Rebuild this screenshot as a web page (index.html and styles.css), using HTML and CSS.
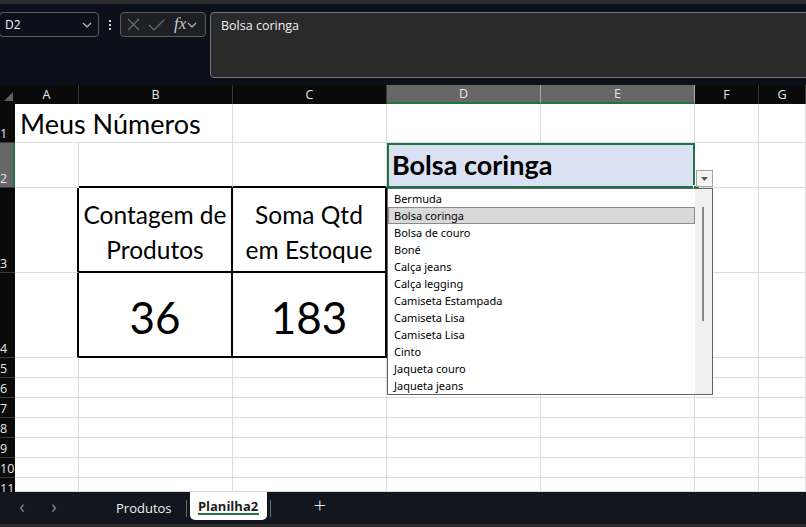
FILE: index.html
```html
<!DOCTYPE html>
<html lang="pt-BR">
<head>
    <meta charset="UTF-8">
    <meta name="viewport" content="width=device-width, initial-scale=1.0">
    <title>Planilha2</title>
    <link rel="stylesheet" href="styles.css">
</head>
<body>
    <div class="topstrip"></div>

    <!-- name box + formula bar -->
    <div class="formula">
        <div class="namebox">
            <span>D2</span>
            <svg class="chev" width="10" height="6" viewBox="0 0 10 6"><polyline points="1,1 5,5 9,1"/></svg>
        </div>
        <div class="dots"><i></i><i></i><i></i></div>
        <div class="fbtns">
            <svg width="13" height="13" viewBox="0 0 13 13"><path d="M1 1 L12 12 M12 1 L1 12"/></svg>
            <svg width="17" height="12" viewBox="0 0 17 12"><path d="M1 6 L6 11 L16 1"/></svg>
            <span class="fx">fx</span>
            <svg class="chev" width="10" height="6" viewBox="0 0 10 6"><polyline points="1,1 5,5 9,1"/></svg>
        </div>
        <div class="fbar">Bolsa coringa</div>
    </div>

    <div class="sheet">
        <!-- column headers -->
        <div class="corner"><svg width="15" height="19" viewBox="0 0 15 19"><polygon points="4,16 13,16 13,7"/></svg></div>
        <div class="ch">A</div>
        <div class="ch">B</div>
        <div class="ch">C</div>
        <div class="ch sel">D</div>
        <div class="ch sel">E</div>
        <div class="ch">F</div>
        <div class="ch">G</div>

        <!-- row 1 -->
        <div class="rh">1</div>
        <div class="c title">Meus Números</div>
        <div class="c"></div>
        <div class="c"></div>
        <div class="c"></div>
        <div class="c"></div>
        <div class="c"></div>
        <div class="c"></div>

        <!-- row 2 -->
        <div class="rh sel">2</div>
        <div class="c"></div>
        <div class="c box-top"></div>
        <div class="c box-top"></div>
        <div class="c active">Bolsa coringa</div>
        <div class="c"></div>
        <div class="c"></div>

        <!-- row 3 -->
        <div class="rh">3</div>
        <div class="c box-left"></div>
        <div class="c box label">Contagem de<br>Produtos</div>
        <div class="c box label">Soma Qtd<br>em Estoque</div>
        <div class="c"></div>
        <div class="c"></div>
        <div class="c"></div>
        <div class="c"></div>

        <!-- row 4 -->
        <div class="rh">4</div>
        <div class="c box-left"></div>
        <div class="c box num">36</div>
        <div class="c box num">183</div>
        <div class="c"></div>
        <div class="c"></div>
        <div class="c"></div>
        <div class="c"></div>

        <div class="rh">5</div><div class="c"></div><div class="c"></div><div class="c"></div><div class="c"></div><div class="c"></div><div class="c"></div><div class="c"></div>
        <div class="rh">6</div><div class="c"></div><div class="c"></div><div class="c"></div><div class="c"></div><div class="c"></div><div class="c"></div><div class="c"></div>
        <div class="rh">7</div><div class="c"></div><div class="c"></div><div class="c"></div><div class="c"></div><div class="c"></div><div class="c"></div><div class="c"></div>
        <div class="rh">8</div><div class="c"></div><div class="c"></div><div class="c"></div><div class="c"></div><div class="c"></div><div class="c"></div><div class="c"></div>
        <div class="rh">9</div><div class="c"></div><div class="c"></div><div class="c"></div><div class="c"></div><div class="c"></div><div class="c"></div><div class="c"></div>
        <div class="rh">10</div><div class="c"></div><div class="c"></div><div class="c"></div><div class="c"></div><div class="c"></div><div class="c"></div><div class="c"></div>
        <div class="rh last">11</div><div class="c"></div><div class="c"></div><div class="c"></div><div class="c"></div><div class="c"></div><div class="c"></div><div class="c"></div>

        <!-- validation dropdown -->
        <div class="fill-handle"></div>
        <div class="dd-btn"><svg width="7" height="4" viewBox="0 0 7 4"><polygon points="0,0 7,0 3.5,4"/></svg></div>
        <div class="dd-list">
            <ul>
                <li>Bermuda</li>
                <li class="hl">Bolsa coringa</li>
                <li>Bolsa de couro</li>
                <li>Boné</li>
                <li>Calça jeans</li>
                <li>Calça legging</li>
                <li>Camiseta Estampada</li>
                <li>Camiseta Lisa</li>
                <li>Camiseta Lisa</li>
                <li>Cinto</li>
                <li>Jaqueta couro</li>
                <li>Jaqueta jeans</li>
            </ul>
            <div class="scroll"><div class="thumb"></div></div>
        </div>
    </div>

    <div class="tabs">
        <span class="arrow">&lsaquo;</span>
        <span class="arrow">&rsaquo;</span>
        <span class="tab">Produtos</span>
        <span class="sep"></span>
        <span class="tab current">Planilha2</span>
        <span class="sep"></span>
        <span class="plus">+</span>
    </div>
    <div class="bottomstrip"></div>
</body>
</html>
```

FILE: styles.css
```css
body {
    margin: 0;
    padding: 0;
    background-color: #0b101a;
    font-family: "Open Sans", "Noto Sans", sans-serif;
    overflow: hidden;
}

.topstrip {
    height: 4px;
    background-color: #2c2c2c;
}

/* formula area */
.formula {
    display: flex;
    align-items: flex-start;
    height: 81px;
    padding-top: 8px;
    box-sizing: border-box;
}

.namebox {
    display: flex;
    align-items: center;
    justify-content: space-between;
    width: 100px;
    height: 25px;
    margin-left: -1px;
    padding: 0 6px 0 5px;
    box-sizing: border-box;
    border: 1px solid #5b5b5b;
    border-radius: 4px;
    color: #f2f2f2;
    font-size: 12px;
}

.chev polyline {
    fill: none;
    stroke: #bdbdbd;
    stroke-width: 1.2;
}

.dots {
    width: 21px;
    height: 25px;
    display: flex;
    flex-direction: column;
    align-items: center;
    justify-content: center;
    gap: 2px;
}

.dots i {
    display: block;
    width: 2px;
    height: 2px;
    background-color: #d0d0d0;
}

.fbtns {
    display: flex;
    align-items: center;
    width: 86px;
    height: 25px;
    padding: 0 4px 0 6px;
    box-sizing: border-box;
    border: 1px solid #5b5b5b;
    border-radius: 4px;
    background-color: #1d1f24;
}

.fbtns path {
    fill: none;
    stroke: #6e6e6e;
    stroke-width: 1.2;
}

.fbtns svg:nth-child(2) {
    margin-left: 8px;
}

.fx {
    margin-left: 9px;
    font-family: "Liberation Serif", serif;
    font-style: italic;
    font-size: 17px;
    color: #c9c9c9;
    line-height: 1;
    margin-top: -3px;
}

.fbtns .chev {
    margin-left: 1px;
}

.fbar {
    flex: 1;
    height: 66px;
    margin-left: 4px;
    margin-right: -10px;
    padding: 4px 10px;
    box-sizing: border-box;
    border: 1px solid #767676;
    border-radius: 4px;
    background-color: #2a2a2a;
    color: #f2f2f2;
    font-size: 12.5px;
}

/* worksheet grid */
.sheet {
    position: relative;
    display: grid;
    grid-template-columns: 15px 64px 154px 154px 154px 154px 64px 47px;
    grid-template-rows: 19px 39px 45px 85px 85px 20px 20px 20px 20px 20px 20px 14px;
    height: 407px;
    overflow: hidden;
    background-color: #ffffff;
}

.corner {
    background-color: #0a0a0a;
}

.corner polygon {
    fill: #5e5e5e;
}

.ch {
    display: flex;
    align-items: center;
    justify-content: center;
    background-color: #0a0a0a;
    border-right: 1px solid #3a3a3a;
    color: #e8e8e8;
    font-size: 12.5px;
}

.ch.sel {
    background-color: #666666;
    border-right-color: #a9a9a9;
    border-bottom: 2px solid #1f7244;
}

.rh {
    display: flex;
    align-items: flex-end;
    padding-left: 0;
    background-color: #0a0a0a;
    border-bottom: 1px solid #3a3a3a;
    color: #e8e8e8;
    font-size: 12.5px;
    line-height: 16px;
    overflow: hidden;
}

.rh.last {
    align-items: flex-start;
    border-bottom: none;
    padding-top: 3px;
}

.rh.sel {
    background-color: #666666;
    border-right: 2px solid #1f7244;
}

.c {
    border-right: 1px solid #dcdcdc;
    border-bottom: 1px solid #dcdcdc;
    font-family: Lato, "Open Sans", sans-serif;
    color: #000000;
}

.title {
    display: flex;
    align-items: flex-end;
    padding-left: 5px;
    border-right: none;
    white-space: nowrap;
    font-size: 27px;
    line-height: 36px;
}

.box-top {
    border-bottom: 2px solid #000000;
}

.box-left {
    border-right: 2px solid #000000;
}

.box {
    display: flex;
    align-items: center;
    justify-content: center;
    text-align: center;
    border-right: 2px solid #000000;
    border-bottom: 2px solid #000000;
}

.label {
    font-size: 24.5px;
    line-height: 35px;
    padding-top: 4px;
}

.num {
    font-size: 44px;
    padding-top: 4px;
}

.active {
    grid-column: span 2;
    display: flex;
    align-items: flex-end;
    padding: 0 0 4px 3px;
    border: 2px solid #1f7244;
    background-color: #d9e1f2;
    font-weight: bold;
    font-size: 27px;
    line-height: 34px;
}

.fill-handle {
    position: absolute;
    left: 693px;
    top: 100px;
    width: 5px;
    height: 5px;
    background-color: #1f7244;
    border: 1px solid #ffffff;
}

.dd-btn {
    position: absolute;
    left: 696px;
    top: 85px;
    width: 17px;
    height: 17px;
    box-sizing: border-box;
    border: 1px solid #a6a6a6;
    background-color: #f3f3f3;
    display: flex;
    align-items: center;
    justify-content: center;
}

.dd-btn polygon {
    fill: #5a5a5a;
}

.dd-list {
    position: absolute;
    left: 387px;
    top: 103px;
    width: 326px;
    height: 207px;
    box-sizing: border-box;
    border: 1px solid #646464;
    background-color: #ffffff;
    display: flex;
}

.dd-list ul {
    flex: 1;
    margin: 0;
    padding: 1px 0 0 0;
    list-style: none;
}

.dd-list li {
    height: 17px;
    line-height: 17px;
    padding-left: 6px;
    box-sizing: border-box;
    font-family: "Noto Sans", sans-serif;
    font-size: 11px;
    color: #000000;
}

.dd-list li.hl {
    background-color: #d9d9d9;
    border: 1px solid #8a8a8a;
    line-height: 15px;
    padding-left: 5px;
}

.scroll {
    width: 17px;
    background-color: #f0f0f0;
    position: relative;
}

.thumb {
    position: absolute;
    left: 7px;
    top: 18px;
    width: 2px;
    height: 114px;
    background-color: #8a8a8a;
}

/* sheet tabs */
.tabs {
    display: flex;
    align-items: flex-start;
    height: 32px;
    padding-left: 6px;
    background-color: #12171f;
    color: #f0f0f0;
    font-size: 13px;
}

.arrow {
    width: 32px;
    height: 28px;
    display: flex;
    align-items: center;
    justify-content: center;
    color: #8c8c8c;
    font-size: 18px;
}

.tab {
    height: 28px;
    display: flex;
    align-items: center;
    padding-top: 3px;
    box-sizing: border-box;
}

.tabs .tab:nth-child(3) {
    margin-left: 46px;
    margin-right: 14px;
}

.sep {
    width: 1px;
    height: 17px;
    margin-top: 8px;
    background-color: #6a6a6a;
}

.tab.current {
    width: 77px;
    margin: 0 3px;
    justify-content: center;
    padding-top: 0;
    background-color: #ffffff;
    border-radius: 0 0 5px 5px;
    color: #1c1c1c;
    font-weight: bold;
    position: relative;
}

.tab.current::after {
    content: "";
    position: absolute;
    left: 8px;
    right: 8px;
    bottom: 5px;
    height: 2px;
    background-color: #1f7244;
}

.plus {
    margin-left: 43px;
    height: 24px;
    display: flex;
    align-items: center;
    color: #e8e8e8;
    font-size: 22px;
    font-weight: 300;
}

.bottomstrip {
    height: 3px;
    background-color: #2c2c2c;
}
```
